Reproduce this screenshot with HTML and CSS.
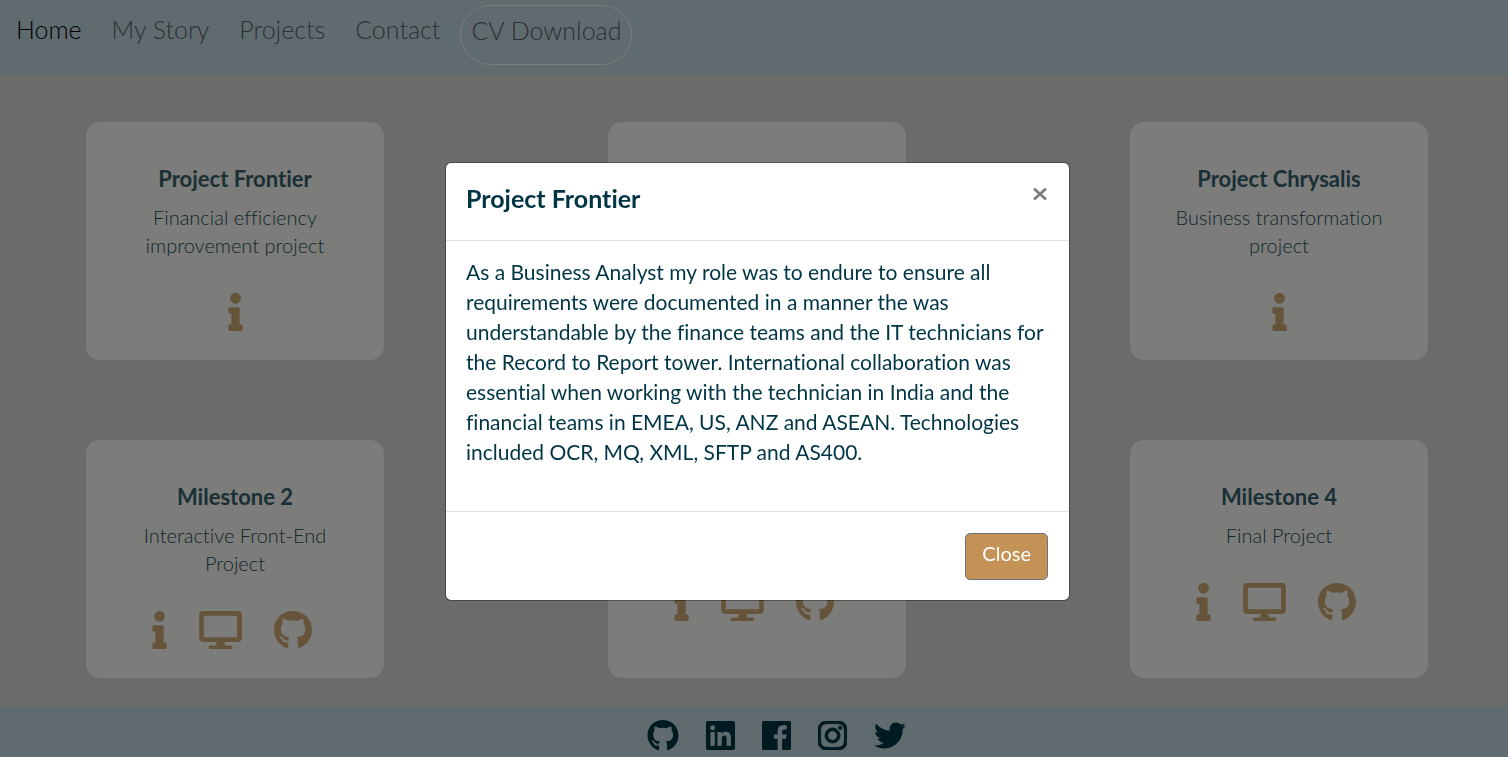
FILE: index.html
```html
<!DOCTYPE html>
<html lang="en">
<head>
<meta charset="utf-8">
<meta name="viewport" content="width=device-width, initial-scale=1">
<title>Projects</title>
<link rel="stylesheet" href="styles.css">
</head>
<body>
<svg class="sprite" aria-hidden="true">
  <symbol id="info" viewBox="0 0 192 512"><path d="M20 424.229h20V279.771H20c-11.046 0-20-8.954-20-20V212c0-11.046 8.954-20 20-20h112c11.046 0 20 8.954 20 20v212.229h20c11.046 0 20 8.954 20 20V492c0 11.046-8.954 20-20 20H20c-11.046 0-20-8.954-20-20v-47.771c0-11.046 8.954-20 20-20zM96 0C56.235 0 24 32.235 24 72s32.235 72 72 72 72-32.235 72-72S135.764 0 96 0z"/></symbol>
  <symbol id="desktop" viewBox="0 0 576 512"><path d="M528 0H48C21.5 0 0 21.5 0 48v320c0 26.5 21.5 48 48 48h192l-16 48h-72c-13.3 0-24 10.7-24 24s10.7 24 24 24h272c13.3 0 24-10.7 24-24s-10.7-24-24-24h-72l-16-48h192c26.500 0 48-21.500 48-48V48c0-26.500-21.500-48-48-48zm-16 352H64V64h448v288z"/></symbol>
  <symbol id="github" viewBox="0 8 496 496"><path d="M165.900 397.400c0 2-2.300 3.600-5.200 3.600-3.300.3-5.600-1.300-5.600-3.600 0-2 2.300-3.600 5.200-3.600 3-.3 5.600 1.300 5.600 3.600zm-31.100-4.500c-.7 2 1.300 4.300 4.300 4.900 2.600 1 5.600 0 6.200-2s-1.300-4.300-4.300-5.200c-2.600-.7-5.500.3-6.200 2.300zm44.200-1.700c-2.900.7-4.900 2.600-4.600 4.900.3 2 2.900 3.300 5.900 2.600 2.900-.7 4.900-2.600 4.600-4.600-.3-1.900-3-3.200-5.900-2.900zM244.800 8C106.100 8 0 113.300 0 252c0 110.900 69.800 205.800 169.500 239.200 12.800 2.300 17.300-5.600 17.300-12.100 0-6.200-.3-40.400-.3-61.400 0 0-70 15-84.700-29.800 0 0-11.400-29.100-27.800-36.600 0 0-22.900-15.700 1.600-15.400 0 0 24.900 2 38.600 25.800 21.900 38.600 58.600 27.500 72.900 20.900 2.300-16 8.800-27.100 16-33.700-55.900-6.200-112.300-14.300-112.300-110.500 0-27.500 7.600-41.300 23.600-58.900-2.600-6.500-11.100-33.300 2.600-67.900 20.900-6.500 69 27 69 27 20-5.600 41.500-8.500 62.800-8.500s42.800 2.900 62.800 8.500c0 0 48.100-33.600 69-27 13.700 34.700 5.200 61.400 2.600 67.900 16 17.700 25.800 31.500 25.800 58.900 0 96.500-58.900 104.200-114.800 110.500 9.200 7.900 17 22.900 17 46.400 0 33.700-.3 75.400-.3 83.600 0 6.500 4.600 14.400 17.300 12.100C428.200 457.800 496 362.900 496 252 496 113.300 383.500 8 244.800 8z"/></symbol>
  <symbol id="linkedin" viewBox="0 32 448 448"><path d="M416 32H31.900C14.300 32 0 46.500 0 64.300v383.400C0 465.500 14.300 480 31.900 480H416c17.600 0 32-14.500 32-32.300V64.300c0-17.800-14.400-32.300-32-32.300zM135.400 416H69V202.200h66.500V416zm-33.200-243c-21.300 0-38.500-17.300-38.500-38.500S80.900 96 102.200 96c21.200 0 38.500 17.300 38.500 38.500 0 21.300-17.200 38.500-38.500 38.500zm282.100 243h-66.400V312c0-24.800-.5-56.700-34.500-56.700-34.600 0-39.900 27-39.900 54.900V416h-66.400V202.200h63.700v29.200h.9c8.900-16.800 30.600-34.500 62.900-34.500 67.200 0 79.700 44.300 79.700 101.900V416z"/></symbol>
  <symbol id="facebook" viewBox="0 32 448 448"><path d="M424 32H24C10.700 32 0 42.700 0 56v400c0 13.300 10.700 24 24 24h217V307h-58v-68h58v-50c0-58 35-90 87-90 25 0 46 2 53 3v60h-36c-28 0-34 13-34 33v44h68l-9 68h-59v173h113c13.300 0 24-10.700 24-24V56c0-13.300-10.700-24-24-24z"/></symbol>
  <symbol id="instagram" viewBox="0 32 448 448"><path d="M224.100 141c-63.600 0-114.900 51.300-114.900 114.900s51.300 114.900 114.900 114.900S339 319.500 339 255.900 287.700 141 224.100 141zm0 189.600c-41.100 0-74.700-33.500-74.700-74.700s33.500-74.700 74.700-74.700 74.700 33.500 74.700 74.700-33.600 74.700-74.700 74.700zm146.400-194.300c0 14.900-12 26.800-26.800 26.800-14.900 0-26.800-12-26.800-26.800s12-26.800 26.800-26.800 26.800 12 26.800 26.800zm76.100 27.200c-1.700-35.900-9.900-67.700-36.200-93.900-26.200-26.200-58-34.400-93.900-36.200-37-2.100-147.900-2.100-184.900 0-35.800 1.700-67.600 9.900-93.900 36.100s-34.400 58-36.200 93.900c-2.100 37-2.100 147.900 0 184.900 1.700 35.900 9.900 67.700 36.200 93.900s58 34.400 93.900 36.200c37 2.100 147.900 2.100 184.900 0 35.900-1.700 67.700-9.900 93.900-36.200 26.200-26.200 34.400-58 36.200-93.900 2.100-37 2.100-147.800 0-184.800zM398.800 388c-7.800 19.600-22.900 34.700-42.600 42.600-29.500 11.700-99.500 9-132.100 9s-102.700 2.600-132.100-9c-19.600-7.800-34.700-22.900-42.600-42.600-11.700-29.500-9-99.500-9-132.100s-2.600-102.700 9-132.100c7.800-19.600 22.900-34.700 42.600-42.600 29.500-11.700 99.500-9 132.100-9s102.700-2.600 132.100 9c19.600 7.800 34.700 22.900 42.600 42.600 11.700 29.500 9 99.500 9 132.100s2.700 102.700-9 132.100z" stroke="currentColor" stroke-width="14"/></symbol>
  <symbol id="twitter" viewBox="0 48 512 416"><path d="M459.370 151.716c.325 4.548.325 9.097.325 13.645 0 138.720-105.583 298.558-298.558 298.558-59.452 0-114.680-17.219-161.137-47.106 8.447.974 16.568 1.299 25.340 1.299 49.055 0 94.213-16.568 130.274-44.832-46.132-.975-84.792-31.188-98.112-72.772 6.498.974 12.995 1.624 19.818 1.624 9.421 0 18.843-1.300 27.614-3.573-48.081-9.747-84.143-51.980-84.143-102.985v-1.299c13.969 7.797 30.214 12.670 47.431 13.319-28.264-18.843-46.781-51.005-46.781-87.391 0-19.492 5.197-37.360 14.294-52.954 51.655 63.675 129.300 105.258 216.365 109.807-1.624-7.797-2.599-15.918-2.599-24.040 0-57.828 46.782-104.934 104.934-104.934 30.213 0 57.502 12.670 76.670 33.137 23.715-4.548 46.456-13.320 66.599-25.340-7.798 24.366-24.366 44.833-46.132 57.827 21.117-2.273 41.584-8.122 60.426-16.243-14.292 20.791-32.161 39.308-52.628 54.253z"/></symbol>
</svg>

<header class="navbar">
  <nav class="nav" aria-label="Main">
    <a class="nav-link active" href="#home">Home</a>
    <a class="nav-link" href="#story">My Story</a>
    <a class="nav-link" href="#projects">Projects</a>
    <a class="nav-link" href="#contact">Contact</a>
    <a class="nav-link download" href="#cv">CV Download</a>
  </nav>
</header>

<main class="projects">
  <article class="card">
    <h2 class="card-title">Project Frontier</h2>
    <p class="card-text">Financial efficiency improvement project</p>
    <div class="card-icons single">
      <button class="icon-link" type="button" aria-label="Information"><svg class="icon info"><use href="#info"/></svg></button>
    </div>
  </article>
  <article class="card"></article>
  <article class="card">
    <h2 class="card-title">Project Chrysalis</h2>
    <p class="card-text">Business transformation project</p>
    <div class="card-icons single">
      <button class="icon-link" type="button" aria-label="Information"><svg class="icon info"><use href="#info"/></svg></button>
    </div>
  </article>
  <article class="card">
    <h2 class="card-title">Milestone 2</h2>
    <p class="card-text">Interactive Front-End Project</p>
    <div class="card-icons">
      <button class="icon-link" type="button" aria-label="Information"><svg class="icon info"><use href="#info"/></svg></button>
      <a class="icon-link" href="#site" aria-label="Website"><svg class="icon desktop"><use href="#desktop"/></svg></a>
      <a class="icon-link" href="#code" aria-label="GitHub"><svg class="icon github"><use href="#github"/></svg></a>
    </div>
  </article>
  <article class="card">
    <h2 class="card-title">Milestone 3</h2>
    <p class="card-text">Project</p>
    <div class="card-icons">
      <button class="icon-link" type="button" aria-label="Information"><svg class="icon info"><use href="#info"/></svg></button>
      <a class="icon-link" href="#site" aria-label="Website"><svg class="icon desktop"><use href="#desktop"/></svg></a>
      <a class="icon-link" href="#code" aria-label="GitHub"><svg class="icon github"><use href="#github"/></svg></a>
    </div>
  </article>
  <article class="card">
    <h2 class="card-title">Milestone 4</h2>
    <p class="card-text">Final Project</p>
    <div class="card-icons">
      <button class="icon-link" type="button" aria-label="Information"><svg class="icon info"><use href="#info"/></svg></button>
      <a class="icon-link" href="#site" aria-label="Website"><svg class="icon desktop"><use href="#desktop"/></svg></a>
      <a class="icon-link" href="#code" aria-label="GitHub"><svg class="icon github"><use href="#github"/></svg></a>
    </div>
  </article>
</main>

<footer class="footer">
  <a class="social" href="#github-profile" aria-label="GitHub"><svg class="social-icon wide"><use href="#github"/></svg></a>
  <a class="social" href="#linkedin-profile" aria-label="LinkedIn"><svg class="social-icon"><use href="#linkedin"/></svg></a>
  <a class="social" href="#facebook-profile" aria-label="Facebook"><svg class="social-icon"><use href="#facebook"/></svg></a>
  <a class="social" href="#instagram-profile" aria-label="Instagram"><svg class="social-icon"><use href="#instagram"/></svg></a>
  <a class="social" href="#twitter-profile" aria-label="Twitter"><svg class="social-icon wide"><use href="#twitter"/></svg></a>
</footer>

<div class="backdrop">
  <section class="modal" role="dialog" aria-modal="true" aria-labelledby="modal-title">
    <header class="modal-header">
      <h2 class="modal-title" id="modal-title">Project Frontier</h2>
      <button class="modal-x" type="button" aria-label="Close dialog"><svg class="x-icon" viewBox="0 0 14 12"><path d="M2 1.500l10 9M12 1.500l-10 9"/></svg></button>
    </header>
    <div class="modal-body">
      <p class="modal-text">As a Business Analyst my role was to endure to ensure all requirements were documented in a manner the was understandable by the finance teams and the IT technicians for the Record to Report tower. International collaboration was essential when working with the technician in India and the financial teams in EMEA, US, ANZ and ASEAN. Technologies included OCR, MQ, XML, SFTP and AS400.</p>
    </div>
    <footer class="modal-footer">
      <button class="btn-close" type="button">Close</button>
    </footer>
  </section>
</div>
</body>
</html>
```

FILE: styles.css
```css
* { box-sizing: border-box; }

body {
  margin: 0;
  min-height: 100vh;
  display: flex;
  flex-direction: column;
  background: #d7d6d3;
  color: #003545;
  font-family: Lato, "Open Sans", sans-serif;
  font-size: 20px;
  line-height: 30px;
  font-variant-ligatures: none;
}

h2, p { margin: 0; }
button { font: inherit; cursor: pointer; }
a { color: inherit; text-decoration: none; }
.sprite { display: none; }
svg { display: block; fill: currentColor; }

.navbar {
  min-height: 75px;
  padding: 5px 6px;
  background: #c1d7e0;
}
.nav {
  display: flex;
  flex-wrap: wrap;
  gap: 10px;
  font-size: 25px;
  font-weight: 300;
}
.nav-link {
  padding: 9px 10px;
  line-height: 30px;
  color: #566167;
}
.nav-link.active { color: #000; }
.download {
  height: 60px;
  border: 1px solid #fbf3ee;
  border-radius: 30px;
}

.projects {
  flex: 1;
  display: grid;
  grid-template-columns: repeat(3, 298px);
  justify-content: space-between;
  align-content: start;
  gap: 80px 24px;
  padding: 47px 80px 28px 86px;
}
.card {
  min-height: 238px;
  padding: 43px 40px 28px;
  border-radius: 14px;
  background: #f8f8f5;
  text-align: center;
}
.card-title {
  margin-bottom: 10px;
  font-size: 22px;
  line-height: 28px;
  color: #34606c;
}
.card-text {
  margin-bottom: 34px;
  font-size: 20px;
  font-weight: 300;
  line-height: 28px;
  color: #24505c;
}
.card-icons {
  display: flex;
  justify-content: center;
  gap: 32px;
  padding-right: 6px;
}
.card-icons.single { padding-right: 0; }
.icon-link {
  padding: 0;
  border: 0;
  background: none;
  color: #cba873;
}
.icon { height: 38px; }
.info { width: 15px; }
.desktop { width: 43px; }
.github { width: 38px; }

.footer {
  display: flex;
  justify-content: center;
  align-items: center;
  gap: 27px;
  min-height: 51px;
  padding: 8px 0 0 45px;
  background: #c1d7e0;
}
.social-icon { width: 29px; height: 29px; }
.social-icon.wide { width: 32px; height: 31px; }

.backdrop {
  position: fixed;
  inset: 0;
  display: flex;
  justify-content: center;
  align-items: center;
  padding: 6px 0 0 7px;
  background: rgba(0, 0, 0, 0.5);
}
.modal {
  width: 100%;
  max-width: 625px;
  border: 1px solid #0005;
  border-radius: 6px;
  background: #fff;
  background-clip: padding-box;
}
.modal-header {
  display: flex;
  justify-content: space-between;
  align-items: flex-start;
  padding: 20px 21px 19px 20px;
  border-bottom: 1px solid #dee2e6;
}
.modal-title {
  padding-bottom: 8px;
  font-size: 25px;
  line-height: 30px;
}
.modal-x {
  padding: 5px 1px;
  border: 0;
  background: none;
  color: #7f7f7f;
}
.x-icon {
  width: 14px;
  height: 12px;
  fill: none;
  stroke: currentColor;
  stroke-width: 3;
  stroke-linecap: round;
}
.modal-body { padding: 16px 20px 44px; }
.modal-text { font-size: 21px; }
.modal-footer {
  display: flex;
  justify-content: flex-end;
  padding: 21px 21px 20px;
  border-top: 1px solid #dee2e6;
}
.btn-close {
  padding: 4px 16px 11px;
  border: 1px solid #6c757d;
  border-radius: 5px;
  background: #c49256;
  color: #fff;
}
```
